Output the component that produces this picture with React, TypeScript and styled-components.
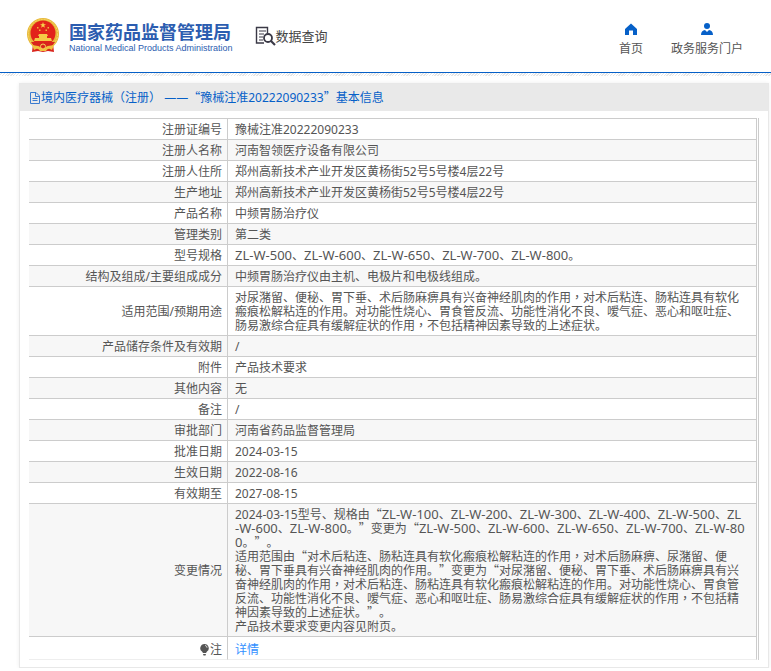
import React from "react";
import styled, { createGlobalStyle } from "styled-components";

const GlobalStyle = createGlobalStyle`
  * { box-sizing: border-box; }
  body {
    margin: 0;
    background: #fff;
    color: #555;
    font: 12px/14px "Noto Sans", "Noto Sans CJK SC", sans-serif;
    text-spacing-trim: space-all;
  }
`;

const Header = styled.header`
  display: flex;
  align-items: flex-start;
  height: 73px;
  padding: 0 28px 0 26px;
  border-bottom: 1px solid #0660c8;
`;

const Hatch = styled.div`
  height: 3px;
  background: repeating-linear-gradient(135deg, #fff 0 1px, #e6e6e6 1px 2px);
`;

const Brand = styled.a`
  display: flex;
  gap: 8px;
  margin-top: 17px;
  color: #2c5db0;
  text-decoration: none;
`;

const BrandText = styled.span`
  display: flex;
  flex-direction: column;
  padding-top: 3px;
  white-space: nowrap;
`;

const BrandName = styled.strong`
  font: 700 18px/22px "Noto Sans CJK SC", sans-serif;
`;

const BrandSub = styled.span`
  font: 400 9px/12px "Liberation Sans", sans-serif;
`;

const Query = styled.h1`
  display: flex;
  align-items: center;
  margin: 26px 0 0 22px;
  color: #444;
  white-space: nowrap;
  font: 400 13px/20px "Noto Sans CJK SC", sans-serif;
`;

const Nav = styled.nav`
  display: flex;
  gap: 28px;
  margin: 23px 0 0 auto;
`;

const NavLink = styled.a`
  display: flex;
  flex-direction: column;
  align-items: center;
  gap: 5px;
  color: #555;
  text-decoration: none;
  white-space: nowrap;
  line-height: 18px;

  svg { fill: #0660c8; }
`;

const Panel = styled.main`
  margin: 7px 2px 0 19px;
  border: 1px solid #e8e8e8;
  box-shadow: 0 0 4px #eee;
`;

const PanelTitle = styled.h2`
  display: flex;
  align-items: center;
  height: 27px;
  margin: 0;
  padding: 0 9px;
  background: #e9e9e9;
  color: #0660c8;
  font-size: 12px;
  font-weight: 400;
  white-space: nowrap;
`;

const TableFrame = styled.div`
  margin: 7px 9px;
  padding-right: 1px;
  border-right: 1px solid #ccc;
`;

const Table = styled.table`
  width: 100%;
  border-collapse: separate;
  border-spacing: 0;
  border-top: 1px solid #ccc;
  table-layout: fixed;
`;

const Row = styled.tr<{ $last?: boolean }>`
  &:nth-child(even) { background: ${(p) => (p.$last ? "#fff" : "#f7f7f7")}; }

  th, td {
    padding: ${(p) => (p.$last ? 6 : 4)}px 5px 2px 7px;
    border-right: 1px solid #ccc;
    border-bottom: 1px solid ${(p) => (p.$last ? "#eee" : "#ccc")};
    vertical-align: middle;
  }

  td { padding-right: 8px; }
`;

const Label = styled.th`
  width: 199px;
  font-weight: 400;
  text-align: right;
`;

const Value = styled.td`
  text-align: left;
  word-break: break-all;
`;

const Quote = styled.span`
  font-family: "Noto Sans CJK SC", sans-serif;
  line-height: 0;
`;

const Centred = styled.span`
  font-family: "Noto Sans CJK TC", sans-serif;
  line-height: 0;
`;

const ModelCode = styled.span`
  font-size: 13px;
  line-height: 0;
`;

const Unbroken = styled.span`
  white-space: nowrap;
`;

const DetailLink = styled.a`
  color: #3390ff;
  text-decoration: none;
`;

const Note = styled.span`
  display: flex;
  align-items: center;
  justify-content: flex-end;
`;

function Mixed({ text }: { text: string }) {
  return (
    <>
      {text.split(/([“”]|[，（）]|ZL-W-\d+)/).map((part, i) => {
        if (/^[“”]$/.test(part)) return <Quote key={i}>{part}</Quote>;
        if (/^[，（）]$/.test(part)) return <Centred key={i}>{part}</Centred>;
        if (/^ZL-W/.test(part)) {
          return (
            <ModelCode key={i}>
              ZL<wbr /><Unbroken>-W</Unbroken>{part.slice(4)}
            </ModelCode>
          );
        }
        return part;
      })}
    </>
  );
}

const Emblem = () => (
  <svg width="35" height="36" viewBox="0 0 35 36" aria-hidden="true">
    <path d="M7 27h20l1 8-6-1-5 1-5-1-6 1z" fill="#d9241c" />
    <circle cx="17" cy="17" r="16" fill="#e8b93a" />
    <circle cx="17" cy="17" r="14.600" fill="none" stroke="#f7d969" strokeDasharray="2 1" />
    <circle cx="17" cy="16" r="12.500" fill="#e2231a" />
    <path d="M17 5l.8 2.200h2.200l-1.800 1.400.7 2.200-1.900-1.300-1.900 1.300.7-2.200L14 7.200h2.200z" fill="#f8d34c" />
    <path d="M11 10h1.500v1.500H11zM21.500 10H23v1.500h-1.500zM13 12.500h1.500V14H13zM19.500 12.500H21V14h-1.500z" fill="#f0b83c" />
    <path d="M13 17h8l1 2h-1v2h4l1 3H8l1-3h4v-2h-1z" fill="#f5c945" />
    <path d="M5 25h24l-3 4h-4l-5 2-5-2H8z" fill="#d9241c" />
    <path d="M6 28l6 1 2 2h6l2-2 6-1-2 5-4-2-2 3h-6l-2-3-4 2z" fill="#f1c23e" />
    <circle cx="17" cy="29.500" r="2.500" fill="#d9241c" stroke="#f6d35b" />
  </svg>
);

const QueryIcon = () => (
  <svg width="21" height="20" viewBox="0 0 21 20" fill="none" stroke="#3a3946" aria-hidden="true">
    <path d="M9 17H1.500V1.500h11V7" strokeWidth="1.400" />
    <path d="M4 5h7M4 8h5M4 11h4M4 14h4" strokeWidth="1.200" />
    <circle cx="13" cy="12" r="4" strokeWidth="1.800" />
    <path d="M16 15l4 4" strokeWidth="2.200" />
  </svg>
);

const HomeIcon = () => (
  <svg width="12" height="12" viewBox="0 0 12 12" aria-hidden="true">
    <path d="M6 .5L12 6v6H8V7.500H4V12H0V6z" />
  </svg>
);

const UserIcon = () => (
  <svg width="12" height="12" viewBox="0 0 12 12" aria-hidden="true">
    <circle cx="6" cy="3" r="3" />
    <path d="M0 12c0-3 1.500-4.500 4-5l2 2 2-2c2.500.5 4 2 4 5z" />
  </svg>
);

const DocIcon = () => (
  <svg width="12" height="12" viewBox="0 0 12 12" fill="none" stroke="#3a7bd0" aria-hidden="true">
    <path d="M1.500.500h5.500l3.500 3.500v7.500h-9zM6.500.500v4h4M3.500 6.500h5M3.500 8.500h5" />
  </svg>
);

const BulbIcon = () => (
  <svg width="11" height="12" viewBox="0 0 11 12" fill="#555" aria-hidden="true">
    <path d="M5.500 0a4.200 4.200 0 0 1 2.500 7.600L7 9H4L3 7.600A4.200 4.200 0 0 1 5.500 0zM4 10h3l-.5 1.500h-2z" />
    <path d="M6 1.500c1.400.2 2 1 2 2.200" fill="none" stroke="#fff" strokeWidth=".8" />
  </svg>
);

const records: { label: string; lines: string[] }[] = [
  { label: "注册证编号", lines: ["豫械注准20222090233"] },
  { label: "注册人名称", lines: ["河南智领医疗设备有限公司"] },
  { label: "注册人住所", lines: ["郑州高新技术产业开发区黄杨街52号5号楼4层22号"] },
  { label: "生产地址", lines: ["郑州高新技术产业开发区黄杨街52号5号楼4层22号"] },
  { label: "产品名称", lines: ["中频胃肠治疗仪"] },
  { label: "管理类别", lines: ["第二类"] },
  { label: "型号规格", lines: ["ZL-W-500、ZL-W-600、ZL-W-650、ZL-W-700、ZL-W-800。"] },
  { label: "结构及组成/主要组成成分", lines: ["中频胃肠治疗仪由主机、电极片和电极线组成。"] },
  {
    label: "适用范围/预期用途",
    lines: [
      "对尿潴留、便秘、胃下垂、术后肠麻痹具有兴奋神经肌肉的作用，对术后粘连、肠粘连具有软化瘢痕松解粘连的作用。对功能性烧心、胃食管反流、功能性消化不良、嗳气症、恶心和呕吐症、肠易激综合症具有缓解症状的作用，不包括精神因素导致的上述症状。",
    ],
  },
  { label: "产品储存条件及有效期", lines: ["/"] },
  { label: "附件", lines: ["产品技术要求"] },
  { label: "其他内容", lines: ["无"] },
  { label: "备注", lines: ["/"] },
  { label: "审批部门", lines: ["河南省药品监督管理局"] },
  { label: "批准日期", lines: ["2024-03-15"] },
  { label: "生效日期", lines: ["2022-08-16"] },
  { label: "有效期至", lines: ["2027-08-15"] },
  {
    label: "变更情况",
    lines: [
      "2024-03-15型号、规格由“ZL-W-100、ZL-W-200、ZL-W-300、ZL-W-400、ZL-W-500、ZL-W-600、ZL-W-800。”变更为“ZL-W-500、ZL-W-600、ZL-W-650、ZL-W-700、ZL-W-800。”。",
      "适用范围由“对术后粘连、肠粘连具有软化瘢痕松解粘连的作用，对术后肠麻痹、尿潴留、便秘、胃下垂具有兴奋神经肌肉的作用。”变更为“对尿潴留、便秘、胃下垂、术后肠麻痹具有兴奋神经肌肉的作用，对术后粘连、肠粘连具有软化瘢痕松解粘连的作用。对功能性烧心、胃食管反流、功能性消化不良、嗳气症、恶心和呕吐症、肠易激综合症具有缓解症状的作用，不包括精神因素导致的上述症状。”。",
      "产品技术要求变更内容见附页。",
    ],
  },
];

export default function App() {
  return (
    <>
      <GlobalStyle />
      <Header>
        <Brand href="#">
          <Emblem />
          <BrandText>
            <BrandName>国家药品监督管理局</BrandName>
            <BrandSub>National Medical Products Administration</BrandSub>
          </BrandText>
        </Brand>
        <Query>
          <QueryIcon />
          数据查询
        </Query>
        <Nav>
          <NavLink href="#"><HomeIcon />首页</NavLink>
          <NavLink href="#"><UserIcon />政务服务门户</NavLink>
        </Nav>
      </Header>
      <Hatch />
      <Panel>
        <PanelTitle>
          <DocIcon />
          <span><Mixed text="境内医疗器械（注册） ——“豫械注准20222090233”基本信息" /></span>
        </PanelTitle>
        <TableFrame>
          <Table>
            <tbody>
              {records.map(({ label, lines }) => (
                <Row key={label}>
                  <Label scope="row">{label}</Label>
                  <Value>
                    {lines.map((line, i) => (
                      <React.Fragment key={i}>
                        {i > 0 && <br />}
                        <Mixed text={line} />
                      </React.Fragment>
                    ))}
                  </Value>
                </Row>
              ))}
              <Row $last>
                <Label scope="row"><Note><BulbIcon />注</Note></Label>
                <Value><DetailLink href="#">详情</DetailLink></Value>
              </Row>
            </tbody>
          </Table>
        </TableFrame>
      </Panel>
    </>
  );
}
